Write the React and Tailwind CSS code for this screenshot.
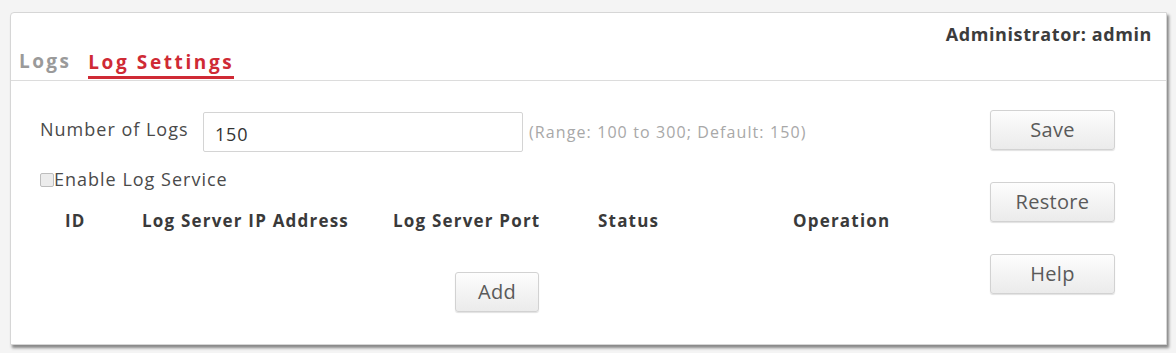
import React from 'react'

const font = { fontFamily: '"Open Sans", "Noto Sans", "DejaVu Sans", sans-serif' }

function Btn({ children, className = '' }) {
  return (
    <button
      className={`h-[40px] rounded-[3px] border border-[#d2d2d2] bg-gradient-to-b from-[#fdfdfd] to-[#ebebeb] text-[20px] tracking-[0.3px] text-[#5a5a5a] shadow-[0_1px_1px_rgba(0,0,0,0.12)] ${className}`}
    >
      {children}
    </button>
  )
}

export default function App() {
  return (
    <div className="w-[1176px] h-[353px] bg-[#f4f4f4] pt-[12px] pl-[10px]" style={font}>
      <div className="w-[1157px] h-[333px] bg-white border border-[#d6d6d6] rounded-tl-[4px] shadow-[2px_3px_3px_rgba(0,0,0,0.45)] flex flex-col">
        <div className="h-[68px] border-b border-[#dcdcdc] flex flex-col justify-between">
          <div className="flex justify-end pr-[14px] pt-[8px]">
            <span className="text-[18px] font-bold text-[#3c3c3c] tracking-[0.6px]">Administrator: admin</span>
          </div>
          <div className="flex items-end pl-[8px] gap-[17px] pb-[2px]">
            <span className="text-[19px] leading-[26px] font-bold text-[#9a9a9a] pb-[5px] tracking-[2.4px]">Logs</span>
            <span className="text-[19px] leading-[26px] font-bold text-[#cf2a35] pb-[1px] border-b-[3px] border-[#cf2a35] tracking-[2.6px]">Log Settings</span>
          </div>
        </div>

        <div className="flex flex-1">
          <div className="flex-1 pl-[29px] pt-[31px]">
            <div className="flex items-center">
              <span className="text-[18px] text-[#4a4a4a] w-[163px] tracking-[1px] pb-[6px]">Number of Logs</span>
              <div className="w-[320px] h-[40px] border border-[#d4d4d4] rounded-[2px] flex items-center pl-[11px] text-[18px] tracking-[0.8px] text-[#333] pt-[4px]">150</div>
              <span className="ml-[6px] text-[16px] text-[#a8a8a8] tracking-[1.1px]">(Range: 100 to 300; Default: 150)</span>
            </div>
            <div className="flex items-center mt-[14px]">
              <span className="w-[14px] h-[14px] border border-[#bdbdbd] bg-[#ececec] rounded-[2px]" />
              <span className="text-[18px] text-[#4a4a4a] tracking-[1px]">Enable Log Service</span>
            </div>
            <div className="flex items-center mt-[15px] text-[17px] font-bold text-[#3a3a3a] h-[26px] tracking-[1.2px]">
              <span className="ml-[25px] w-[77px]">ID</span>
              <span className="w-[251px]">Log Server IP Address</span>
              <span className="w-[205px]">Log Server Port</span>
              <span className="w-[195px]">Status</span>
              <span>Operation</span>
            </div>
            <div className="mt-[38px] pl-[415px]">
              <Btn className="w-[84px]">Add</Btn>
            </div>
          </div>
          <div className="w-[177px] pt-[29px] flex flex-col gap-[32px] pl-[1px]">
            <Btn className="w-[125px]">Save</Btn>
            <Btn className="w-[125px]">Restore</Btn>
            <Btn className="w-[125px]">Help</Btn>
          </div>
        </div>
      </div>
    </div>
  )
}
